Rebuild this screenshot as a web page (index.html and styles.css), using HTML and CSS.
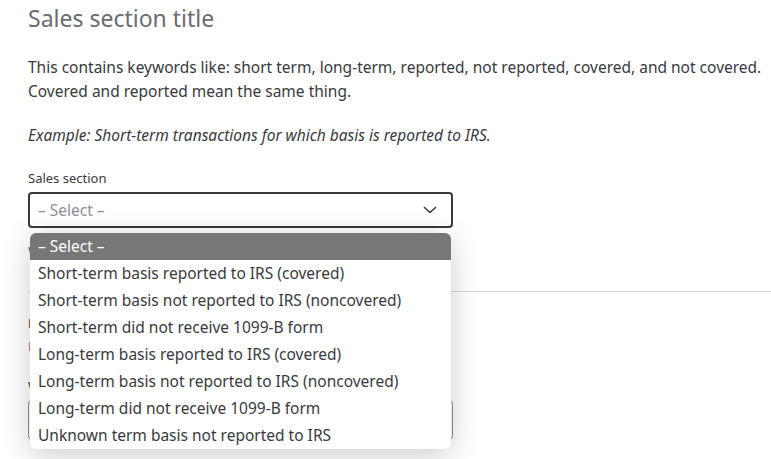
FILE: index.html
```html
<!DOCTYPE html>
<html lang="en">
<head>
    <meta charset="UTF-8">
    <meta name="viewport" content="width=device-width, initial-scale=1.0">
    <title>Sales section</title>
    <link rel="stylesheet" href="styles.css">
</head>
<body>

    <div class="page">
        <h1 class="section-title">Sales section title</h1>
        <p class="intro">This contains keywords like: short term, long-term, reported, not reported, covered, and not covered. Covered and reported mean the same thing.</p>
        <p class="example">Example: Short-term transactions for which basis is reported to IRS.</p>

        <div class="field">
            <label class="field-label" for="salesSection">Sales section</label>
            <div class="select-wrap">
                <div class="select-box" id="salesSection">
                    <span class="placeholder">&ndash; Select &ndash;</span>
                    <svg class="chevron" width="14" height="8" viewBox="0 0 14 8">
                        <path d="M1.5 1.5 L7 6.5 L12.5 1.5" fill="none" stroke="#393a3d" stroke-width="1.6" stroke-linecap="round" stroke-linejoin="round"/>
                    </svg>
                </div>

                <ul class="dropdown">
                    <li class="option selected">&ndash; Select &ndash;</li>
                    <li class="option">Short-term basis reported to IRS (covered)</li>
                    <li class="option">Short-term basis not reported to IRS (noncovered)</li>
                    <li class="option">Short-term did not receive 1099-B form</li>
                    <li class="option">Long-term basis reported to IRS (covered)</li>
                    <li class="option">Long-term basis not reported to IRS (noncovered)</li>
                    <li class="option">Long-term did not receive 1099-B form</li>
                    <li class="option">Unknown term basis not reported to IRS</li>
                </ul>
            </div>
            <a class="help-link" href="#">What's this?</a>
        </div>

        <hr class="divider">

        <div class="field">
            <label class="field-label">Description of property</label>
            <div class="hint">Example: 100 sh. XYZ Co.</div>
        </div>

        <div class="field">
            <label class="field-label">Which box applies?</label>
            <div class="text-box"></div>
        </div>
    </div>

</body>
</html>
```

FILE: styles.css
```css
html, body {
    min-height: 459px;
}

body {
    margin: 0;
    font-family: 'Noto Sans', sans-serif;
    color: #393a3d;
    background: #fff;
}

.page {
    padding: 3px 0 40px 28px;
}

.section-title {
    margin: 0;
    font-size: 23px;
    font-weight: 400;
    color: #6b6c72;
    line-height: 30px;
}

.intro {
    margin: 22px 0 0;
    font-size: 15.5px;
    line-height: 24px;
    padding-right: 2px;
}

.example {
    margin: 20px 0 0;
    font-size: 15.5px;
    font-style: italic;
    line-height: 24px;
}

.field {
    margin-top: 22px;
}

.field-label {
    display: block;
    font-size: 13px;
    line-height: 18px;
    margin-bottom: 5px;
}

.select-wrap {
    position: relative;
    width: 425px;
}

.select-box {
    height: 36px;
    box-sizing: border-box;
    border: 2px solid #393a3d;
    border-radius: 4px;
    display: flex;
    align-items: center;
    justify-content: space-between;
    padding: 0 14px 0 8px;
}

.placeholder {
    color: #8d9096;
    font-size: 15.5px;
}

.dropdown {
    position: absolute;
    top: 41px;
    left: 2px;
    width: 421px;
    margin: 0;
    padding: 0;
    list-style: none;
    background: #fff;
    border-radius: 6px;
    overflow: hidden;
    box-shadow: 0 6px 30px rgba(0, 0, 0, 0.2);
    z-index: 2;
}

.option {
    height: 27px;
    line-height: 27px;
    padding-left: 8px;
    font-size: 15.5px;
    color: #393a3d;
}

.option.selected {
    background: #777777;
    color: #fff;
}

.help-link {
    display: inline-block;
    margin-top: 14px;
    font-size: 13px;
    color: #0077c5;
    text-decoration: none;
}

.divider {
    border: none;
    border-top: 1px solid #d4d7dc;
    margin: 30px 0 0;
}

.hint {
    font-size: 13px;
    color: #6b6c72;
}

.text-box {
    width: 425px;
    height: 40px;
    box-sizing: border-box;
    border: 1px solid #8d9096;
    border-radius: 4px;
}
```
